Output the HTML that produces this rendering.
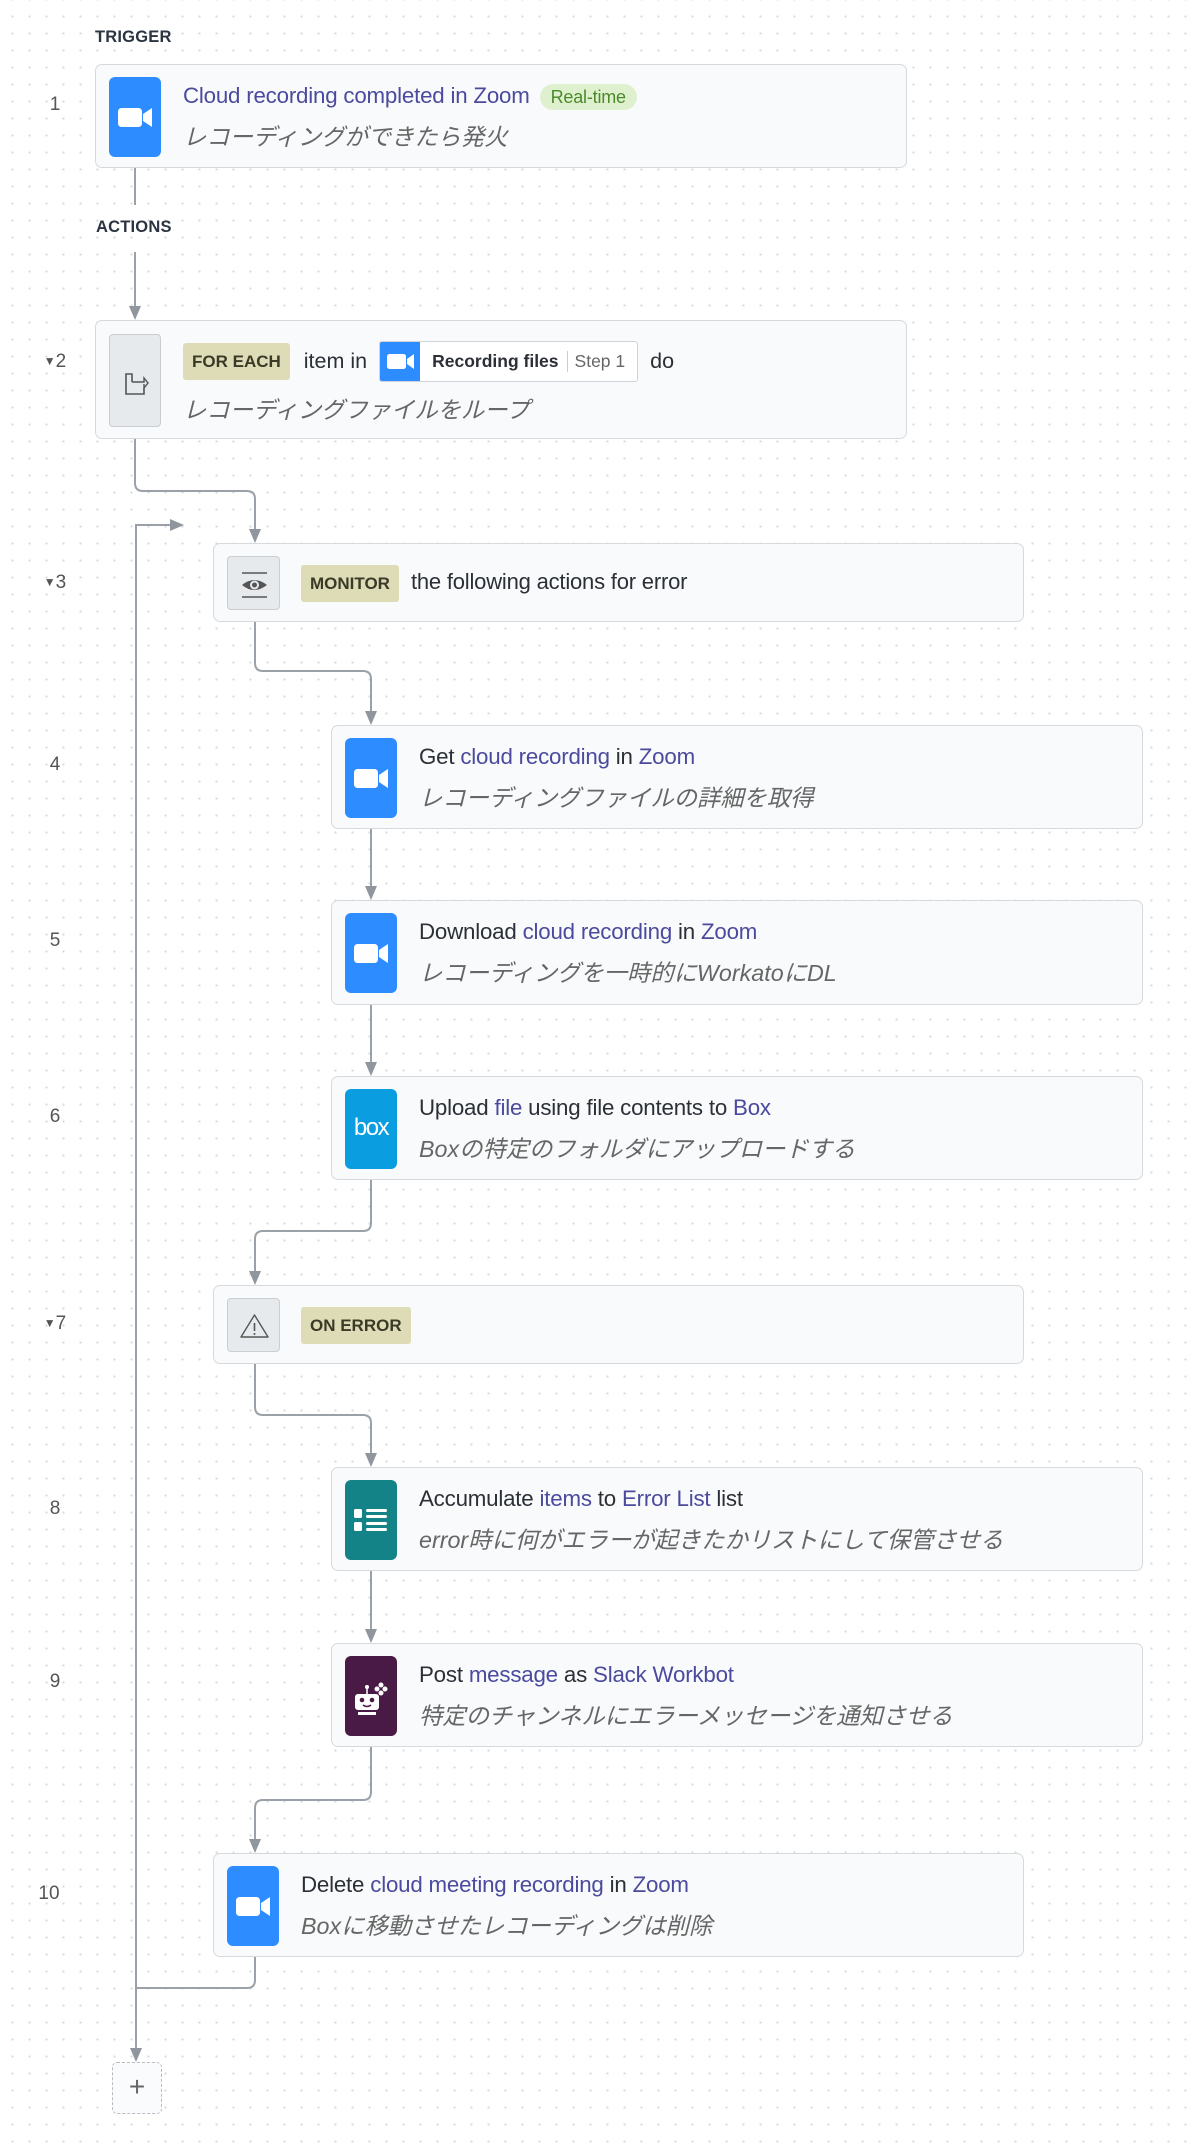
<!DOCTYPE html>
<html><head><meta charset="utf-8"><style>
*{box-sizing:border-box;margin:0;padding:0}
body{width:1200px;height:2149px;position:relative;overflow:hidden;background-color:#fff;
background-image:radial-gradient(circle,#d6d9dc 1px,transparent 1.3px);background-size:17px 17px;background-position:4px 8px;
font-family:"Liberation Sans","Noto Sans CJK JP",sans-serif;color:#2b2f36}
.a{position:absolute}
.lbl{position:absolute;font-size:16.5px;font-weight:bold;color:#2b3440;letter-spacing:.2px}
.num{position:absolute;font-size:19px;color:#555;width:40px;text-align:center}
.card{position:absolute;background:#f9fafb;border:1.5px solid #d6dadd;border-radius:7px}
.ic{position:absolute;left:13px;top:12px;width:52px;height:80px;border-radius:6px}
.t{position:absolute;left:87px;top:18px;font-size:22.3px;white-space:nowrap;line-height:26px;letter-spacing:-.2px}
.s{position:absolute;left:87px;top:58px;font-size:23.3px;font-style:italic;color:#666;white-space:nowrap;line-height:28px}
.l{color:#4b4a9e}
.pill{display:inline-block;background:#dedcb6;color:#3a3a28;font-weight:bold;font-size:17px;padding:0 9px;line-height:37px;border-radius:3px}
.gi{position:absolute;left:13px;background:#e7eaed;border:1px solid #c9ced3;border-radius:4px}
</style></head><body>
<svg class="a" style="left:0;top:0" width="1200" height="2149">
<g fill="none" stroke="#9aa1a8" stroke-width="2">
<path d="M135 168V205"/><path d="M135 252V308"/>
<path d="M135 439V483Q135 491 143 491H247Q255 491 255 499V531"/>
<path d="M136 1988V525H172"/>
<path d="M255 622V663Q255 671 263 671H363Q371 671 371 679V713"/>
<path d="M371 829V888"/><path d="M371 1005V1064"/>
<path d="M371 1180V1223Q371 1231 363 1231H263Q255 1231 255 1239V1273"/>
<path d="M255 1364V1407Q255 1415 263 1415H363Q371 1415 371 1423V1455"/>
<path d="M371 1571V1631"/>
<path d="M371 1747V1792Q371 1800 363 1800H263Q255 1800 255 1808V1841"/>
<path d="M255 1957V1980Q255 1988 247 1988H136V2050"/>
</g>
<g fill="#8f969d">
<path d="M129 306h12l-6 14z"/><path d="M249 529h12l-6 14z"/><path d="M170 519v12l14-6z"/>
<path d="M365 711h12l-6 14z"/><path d="M365 886h12l-6 14z"/><path d="M365 1062h12l-6 14z"/>
<path d="M249 1271h12l-6 14z"/><path d="M365 1453h12l-6 14z"/><path d="M365 1629h12l-6 14z"/>
<path d="M249 1839h12l-6 14z"/><path d="M130 2048h12l-6 14z"/>
</g>
</svg>

<div class="lbl" style="left:95px;top:28px">TRIGGER</div>
<div class="lbl" style="left:96px;top:218px">ACTIONS</div>

<div class="num" style="left:35px;top:94px">1</div>
<div class="num" style="left:35px;top:351px"><span style="font-size:12px;position:relative;top:-2px">▼</span>2</div>
<div class="num" style="left:35px;top:572px"><span style="font-size:12px;position:relative;top:-2px">▼</span>3</div>
<div class="num" style="left:35px;top:754px">4</div>
<div class="num" style="left:35px;top:930px">5</div>
<div class="num" style="left:35px;top:1106px">6</div>
<div class="num" style="left:35px;top:1313px"><span style="font-size:12px;position:relative;top:-2px">▼</span>7</div>
<div class="num" style="left:35px;top:1498px">8</div>
<div class="num" style="left:35px;top:1671px">9</div>
<div class="num" style="left:29px;top:1883px">10</div>

<!-- card1 -->
<div class="card" style="left:95px;top:64px;width:812px;height:104px">
<svg class="ic" style="background:#2d8cff" viewBox="0 0 52 80"><rect x="9" y="31" width="24" height="19" rx="3.5" fill="#fff"/><path d="M34 37L43 31V50L34 44Z" fill="#fff"/></svg>
<div class="t"><span class="l">Cloud recording completed in Zoom</span> <span style="background:#dff0cf;color:#4b8a2a;font-size:18px;padding:3px 11px;border-radius:15px;margin-left:4px">Real-time</span></div>
<div class="s">レコーディングができたら発火</div>
</div>

<!-- card2 -->
<div class="card" style="left:95px;top:320px;width:812px;height:119px">
<div class="gi" style="top:13px;width:52px;height:93px"><svg width="52" height="93"><path d="M22 47v-8h-6v20h18v-6" fill="none" stroke="#555" stroke-width="1.6"/><path d="M22 47h12v-4l4 5-4 5v-4" fill="none" stroke="#555" stroke-width="1.4"/></svg></div>
<div class="a" style="left:87px;top:20px;white-space:nowrap;font-size:21.5px;display:flex;align-items:center">
<span class="pill">FOR EACH</span><span style="margin:0 12px 0 14px">item in</span>
<span style="display:inline-flex;align-items:center;border:1px solid #cfd3d7;background:#fff;height:41px;border-radius:3px;overflow:hidden">
<svg width="40" height="41" style="background:#2d8cff"><rect x="7" y="13" width="19" height="15" rx="2.5" fill="#fff"/><path d="M27 18L34 13V28L27 23Z" fill="#fff"/></svg>
<b style="font-size:17.5px;margin:0 8px 0 12px">Recording files</b><span style="border-left:1px solid #ccc;padding:0 12px 0 7px;color:#666;font-size:17.5px">Step 1</span></span>
<span style="margin-left:12px">do</span></div>
<div class="s" style="top:75px">レコーディングファイルをループ</div>
</div>

<!-- card3 -->
<div class="card" style="left:213px;top:543px;width:811px;height:79px">
<div class="gi" style="top:12px;width:53px;height:54px"><svg width="53" height="54"><path d="M14 16H39M14 40H39" stroke="#555" stroke-width="1.4"/><path d="M14 28Q26 18 39 28Q26 38 14 28Z" fill="#555"/><circle cx="26.5" cy="28" r="4.5" fill="#e7eaed"/><circle cx="26.5" cy="28" r="2.5" fill="#555"/></svg></div>
<div class="a" style="left:87px;top:21px;font-size:22px;white-space:nowrap;letter-spacing:-.2px"><span class="pill" style="letter-spacing:0">MONITOR</span><span style="margin-left:12px">the following actions for error</span></div>
</div>

<!-- card4 -->
<div class="card" style="left:331px;top:725px;width:812px;height:104px">
<svg class="ic" style="background:#2d8cff" viewBox="0 0 52 80"><rect x="9" y="31" width="24" height="19" rx="3.5" fill="#fff"/><path d="M34 37L43 31V50L34 44Z" fill="#fff"/></svg>
<div class="t">Get <span class="l">cloud recording</span> in <span class="l">Zoom</span></div>
<div class="s">レコーディングファイルの詳細を取得</div>
</div>

<!-- card5 -->
<div class="card" style="left:331px;top:900px;width:812px;height:105px">
<svg class="ic" style="background:#2d8cff" viewBox="0 0 52 80"><rect x="9" y="31" width="24" height="19" rx="3.5" fill="#fff"/><path d="M34 37L43 31V50L34 44Z" fill="#fff"/></svg>
<div class="t">Download <span class="l">cloud recording</span> in <span class="l">Zoom</span></div>
<div class="s">レコーディングを一時的にWorkatoにDL</div>
</div>

<!-- card6 -->
<div class="card" style="left:331px;top:1076px;width:812px;height:104px">
<div class="ic" style="background:#0a9ee0;color:#fff;font-size:24px;text-align:center;line-height:78px;letter-spacing:-1.5px">box</div>
<div class="t">Upload <span class="l">file</span> using file contents to <span class="l">Box</span></div>
<div class="s">Boxの特定のフォルダにアップロードする</div>
</div>

<!-- card7 -->
<div class="card" style="left:213px;top:1285px;width:811px;height:79px">
<div class="gi" style="top:12px;width:53px;height:54px"><svg width="53" height="54"><path d="M26.5 16L40 38H13Z" fill="none" stroke="#555" stroke-width="1.4" stroke-linejoin="round"/><path d="M26.5 24V32" stroke="#555" stroke-width="1.6"/><circle cx="26.5" cy="35" r="1" fill="#555"/></svg></div>
<div class="a" style="left:87px;top:21px;font-size:21px"><span class="pill">ON ERROR</span></div>
</div>

<!-- card8 -->
<div class="card" style="left:331px;top:1467px;width:812px;height:104px">
<svg class="ic" style="background:#138388" viewBox="0 0 52 80"><rect x="9" y="29" width="8" height="9" rx="1.5" fill="#fff"/><rect x="9" y="42" width="8" height="9" rx="1.5" fill="#fff"/><rect x="21" y="29" width="21" height="3" rx="1.5" fill="#fff"/><rect x="21" y="35" width="21" height="3" rx="1.5" fill="#fff"/><rect x="21" y="42" width="21" height="3" rx="1.5" fill="#fff"/><rect x="21" y="48" width="21" height="3" rx="1.5" fill="#fff"/></svg>
<div class="t">Accumulate <span class="l">items</span> to <span class="l">Error List</span> list</div>
<div class="s">error時に何がエラーが起きたかリストにして保管させる</div>
</div>

<!-- card9 -->
<div class="card" style="left:331px;top:1643px;width:812px;height:104px">
<svg class="ic" style="background:#4a1a47" viewBox="0 0 52 80"><rect x="10" y="38" width="24" height="16" rx="3" fill="#fff"/><circle cx="17" cy="44" r="2.3" fill="#4a1a47"/><circle cx="27" cy="44" r="2.3" fill="#4a1a47"/><path d="M18 49Q22 52 26 49" stroke="#4a1a47" stroke-width="1.5" fill="none"/><path d="M22 38V32" stroke="#fff" stroke-width="1.5"/><circle cx="22" cy="31" r="2" fill="#fff"/><path d="M13 56h18v3H13z" fill="#fff"/><circle cx="36" cy="29" r="2.5" fill="#fff"/><circle cx="40" cy="33" r="2.5" fill="#fff"/><circle cx="36" cy="37" r="2.5" fill="#fff"/><circle cx="32" cy="33" r="2.5" fill="#fff"/></svg>
<div class="t">Post <span class="l">message</span> as <span class="l">Slack Workbot</span></div>
<div class="s">特定のチャンネルにエラーメッセージを通知させる</div>
</div>

<!-- card10 -->
<div class="card" style="left:213px;top:1853px;width:811px;height:104px">
<svg class="ic" style="background:#2d8cff" viewBox="0 0 52 80"><rect x="9" y="31" width="24" height="19" rx="3.5" fill="#fff"/><path d="M34 37L43 31V50L34 44Z" fill="#fff"/></svg>
<div class="t">Delete <span class="l">cloud meeting recording</span> in <span class="l">Zoom</span></div>
<div class="s">Boxに移動させたレコーディングは削除</div>
</div>

<div class="a" style="left:112px;top:2062px;width:50px;height:52px;border:1.5px dashed #b5bbc1;border-radius:5px;background:#fafbfc;text-align:center;line-height:48px;font-size:28px;color:#666">+</div>
</body></html>
